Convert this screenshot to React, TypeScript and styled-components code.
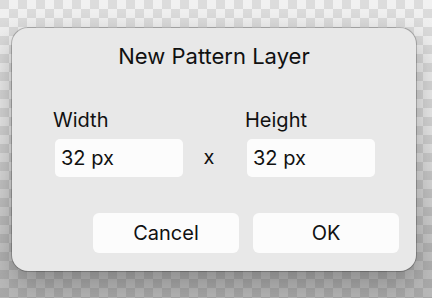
import React from "react";
import styled, { createGlobalStyle } from "styled-components";

const Global = createGlobalStyle`
  html, body { margin: 0; padding: 0; }
  body { font-family: Inter, "Liberation Sans", sans-serif; }
`;

const Page = styled.div`
  width: 432px;
  height: 298px;
  box-sizing: border-box;
  padding: 28px 16px 27px 12px;
  background:
    linear-gradient(to bottom, rgba(0,0,0,0) 0%, rgba(0,0,0,0.04) 40%, rgba(0,0,0,0.24) 100%),
    repeating-conic-gradient(#f1f1f1 0 25%, #dcdcdc 0 50%) 0 0 / 18px 18px;
`;

const Dialog = styled.div`
  width: 404px;
  height: 243px;
  box-sizing: border-box;
  background: #e8e8e8;
  border-radius: 16px;
  box-shadow: 0 0 0 1px rgba(0,0,0,0.22), 0 12px 30px rgba(0,0,0,0.28);
  padding: 14px 17px 18px 0;
  display: flex;
  flex-direction: column;
`;

const Title = styled.div`
  font-size: 22px;
  line-height: 28px;
  color: #111;
  text-align: center;
  padding-left: 17px;
`;

const Fields = styled.div`
  display: grid;
  grid-template-columns: 128px 64px 128px;
  align-items: end;
  margin: 38px 0 0 43px;
`;

const Field = styled.div`
  display: flex;
  flex-direction: column;
  gap: 7px;
`;

const Label = styled.div`
  font-size: 20px;
  line-height: 24px;
  color: #111;
  margin-left: -2px;
`;

const Input = styled.div`
  height: 38px;
  box-sizing: border-box;
  background: #fcfcfc;
  border-radius: 5px;
  padding-left: 6px;
  font-size: 20px;
  line-height: 38px;
  color: #111;
`;

const Times = styled.div`
  height: 38px;
  line-height: 36px;
  font-size: 20px;
  color: #111;
  text-align: center;
  padding-right: 12px;
`;

const Buttons = styled.div`
  display: flex;
  justify-content: flex-end;
  gap: 14px;
  margin-top: 36px;
`;

const Button = styled.div`
  width: 146px;
  height: 40px;
  background: #fcfcfc;
  border-radius: 6px;
  font-size: 20px;
  line-height: 40px;
  text-align: center;
  color: #111;
`;

export default function App() {
  return (
    <>
      <Global />
      <Page>
        <Dialog>
          <Title>New Pattern Layer</Title>
          <Fields>
            <Field>
              <Label>Width</Label>
              <Input>32 px</Input>
            </Field>
            <Times>x</Times>
            <Field>
              <Label>Height</Label>
              <Input>32 px</Input>
            </Field>
          </Fields>
          <Buttons>
            <Button>Cancel</Button>
            <Button>OK</Button>
          </Buttons>
        </Dialog>
      </Page>
    </>
  );
}
